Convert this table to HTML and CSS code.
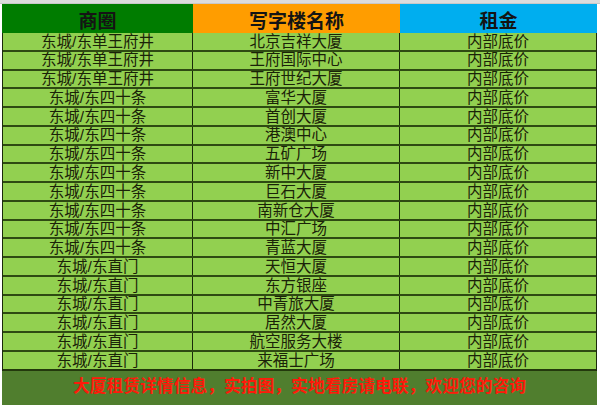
FILE: index.html
```html
<!DOCTYPE html>
<html lang="zh">
<head>
<meta charset="utf-8">
<link rel="stylesheet" href="styles.css">
</head>
<body>
<div class="topbar"></div>
<div class="sheet">
  <div class="head">
    <div class="hc h1">商圈</div>
    <div class="hc h2">写字楼名称</div>
    <div class="hc h3">租金</div>
  </div>
  <div class="body">
    <div class="row"><div class="c">东城/东单王府井</div><div class="c">北京吉祥大厦</div><div class="c">内部底价</div></div>
    <div class="row"><div class="c">东城/东单王府井</div><div class="c">王府国际中心</div><div class="c">内部底价</div></div>
    <div class="row"><div class="c">东城/东单王府井</div><div class="c">王府世纪大厦</div><div class="c">内部底价</div></div>
    <div class="row"><div class="c">东城/东四十条</div><div class="c">富华大厦</div><div class="c">内部底价</div></div>
    <div class="row"><div class="c">东城/东四十条</div><div class="c">首创大厦</div><div class="c">内部底价</div></div>
    <div class="row"><div class="c">东城/东四十条</div><div class="c">港澳中心</div><div class="c">内部底价</div></div>
    <div class="row"><div class="c">东城/东四十条</div><div class="c">五矿广场</div><div class="c">内部底价</div></div>
    <div class="row"><div class="c">东城/东四十条</div><div class="c">新中大厦</div><div class="c">内部底价</div></div>
    <div class="row"><div class="c">东城/东四十条</div><div class="c">巨石大厦</div><div class="c">内部底价</div></div>
    <div class="row"><div class="c">东城/东四十条</div><div class="c">南新仓大厦</div><div class="c">内部底价</div></div>
    <div class="row"><div class="c">东城/东四十条</div><div class="c">中汇广场</div><div class="c">内部底价</div></div>
    <div class="row"><div class="c">东城/东四十条</div><div class="c">青蓝大厦</div><div class="c">内部底价</div></div>
    <div class="row"><div class="c">东城/东直门</div><div class="c">天恒大厦</div><div class="c">内部底价</div></div>
    <div class="row"><div class="c">东城/东直门</div><div class="c">东方银座</div><div class="c">内部底价</div></div>
    <div class="row"><div class="c">东城/东直门</div><div class="c">中青旅大厦</div><div class="c">内部底价</div></div>
    <div class="row"><div class="c">东城/东直门</div><div class="c">居然大厦</div><div class="c">内部底价</div></div>
    <div class="row"><div class="c">东城/东直门</div><div class="c">航空服务大楼</div><div class="c">内部底价</div></div>
    <div class="row"><div class="c">东城/东直门</div><div class="c">来福士广场</div><div class="c">内部底价</div></div>
  </div>
  <div class="foot">大厦租赁详情信息，实拍图，实地看房请电联，欢迎您的咨询</div>
</div>
</body>
</html>
```

FILE: styles.css
```css
html, body {
  margin: 0;
  padding: 0;
  background: #ffffff;
  width: 600px;
  height: 407px;
  overflow: hidden;
  font-family: "Liberation Sans", "Noto Sans CJK SC", sans-serif;
}
.topbar {
  height: 3px;
  background: #dcdcdc;
  border-bottom: 1px solid #c8c8c8;
}
.sheet {
  margin-left: 2px;
  width: 595px;
}
.head {
  display: grid;
  grid-template-columns: 191px 207px 197px;
  height: 29px;
}
.hc {
  display: flex;
  align-items: center;
  justify-content: center;
  font-size: 19px;
  line-height: 1;
  font-weight: bold;
  color: #141414;
  padding-top: 5px;
  box-sizing: border-box;
}
.h1 { background: #007c00; }
.h2 { background: #ff9d00; }
.h3 { background: #00aeef; }
.body {
  background: #92d050;
  border-left: 1px solid #1a2a0a;
  border-right: 1px solid #1a2a0a;
}
.row {
  display: grid;
  grid-template-columns: 190px 207px 196px;
  height: 18.78px;
  border-bottom: 2px solid #2e4a12;
  box-sizing: border-box;
}
.row:last-child { border-bottom-color: #23380c; }
.c {
  display: flex;
  align-items: center;
  justify-content: center;
  font-size: 15.5px;
  line-height: 1;
  color: #1a2208;
  border-right: 1px solid #1a2a0a;
  overflow: hidden;
}
.c:last-child { border-right: none; }
.foot {
  background: #507e2e;
  height: 34px;
  display: flex;
  align-items: center;
  justify-content: center;
  font-size: 16.8px;
  line-height: 1;
  font-weight: bold;
  color: #ff1a0a;
}
```
